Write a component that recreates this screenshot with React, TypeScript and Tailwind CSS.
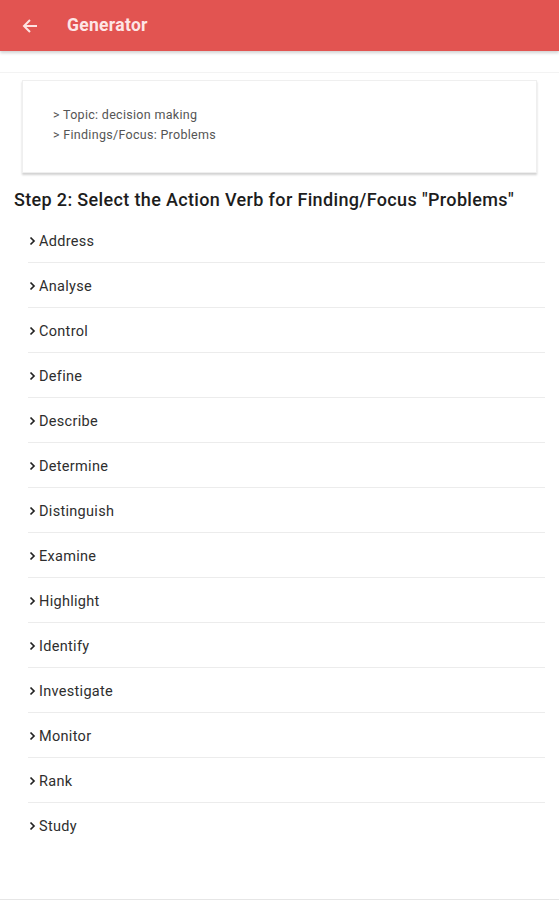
import React from "react";

const verbs = [
  "Address",
  "Analyse",
  "Control",
  "Define",
  "Describe",
  "Determine",
  "Distinguish",
  "Examine",
  "Highlight",
  "Identify",
  "Investigate",
  "Monitor",
  "Rank",
  "Study",
];

function Chevron() {
  return (
    <svg width="7" height="10" viewBox="0 0 7 10" className="mr-[3px] mt-[-2px]">
      <path d="M1.5 1.5 L5 5 L1.5 8.5" fill="none" stroke="#222" strokeWidth="1.7" />
    </svg>
  );
}

export default function App() {
  return (
    <div className="w-[559px] h-[900px] bg-white flex flex-col" style={{ fontFamily: "Roboto, 'Noto Sans', sans-serif" }}>
      <div className="h-[51px] bg-[#e25451] flex items-center shadow-[0_2px_3px_rgba(0,0,0,0.18)] z-10 shrink-0">
        <svg width="16" height="16" viewBox="0 0 16 16" className="ml-[22px]">
          <path d="M15 8H2.5 M8 2 L2 8 L8 14" fill="none" stroke="#fde3e2" strokeWidth="2" />
        </svg>
        <span className="ml-[29px] text-[17.5px] font-bold text-[#fde6e5] tracking-[0.3px]">Generator</span>
      </div>
      <div className="mt-[21px] border-t border-[#f3f3f3] pt-[7px] flex-1 flex flex-col border-b border-b-[#e6e6e6]">
        <div className="ml-[22px] w-[515px] h-[93px] border border-[#efefef] shadow-[0_2px_2px_rgba(0,0,0,0.18)] flex flex-col justify-center pl-[30px] pb-[4px] text-[12.5px] tracking-[0.3px] text-[#555] leading-[20px]">
          <div>&gt; Topic: decision making</div>
          <div>&gt; Findings/Focus: Problems</div>
        </div>
        <div className="mt-[15px] ml-[14px] text-[18px] tracking-[0.35px] font-medium text-[#1d1d1d] leading-[24px] whitespace-nowrap">
          Step 2: Select the Action Verb for Finding/Focus "Problems"
        </div>
        <div className="ml-[28px] w-[517px] mt-[6px] flex flex-col">
          {verbs.map((v, i) => (
            <div
              key={v}
              className={`h-[45px] flex items-center pl-[1px] pt-[3px] text-[14.5px] tracking-[0.3px] text-[#2e2e2e] ${i < verbs.length - 1 ? "border-b border-[#ececec]" : ""}`}
            >
              <Chevron />
              <span>{v}</span>
            </div>
          ))}
        </div>
      </div>
    </div>
  );
}
